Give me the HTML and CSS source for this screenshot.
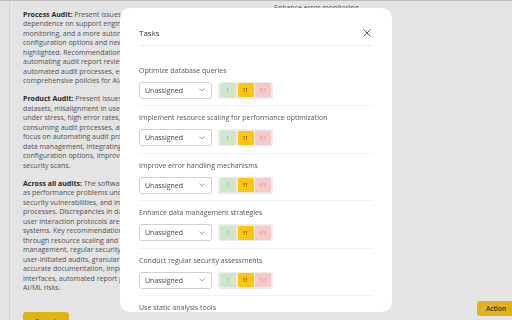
FILE: index.html
```html
<!DOCTYPE html>
<html lang="en">
<head>
<meta charset="utf-8">
<title>Audit report</title>
<link rel="stylesheet" href="styles.css">
</head>
<body>
<div class="page">
  <div class="layout">
    <aside class="report">
      <p><b>Process Audit:</b> Present issues include heavy<br>dependence on support engineers, limited<br>monitoring, and a more automated workflow,<br>configuration options and new features are<br>highlighted. Recommendations include<br>automating audit report reviews, adopting<br>automated audit processes, enforcing<br>comprehensive policies for AI/ML usage.</p>
      <p><b>Product Audit:</b> Present issues include large<br>datasets, misalignment in user expectations,<br>under stress, high error rates, and time-<br>consuming audit processes, alongside a<br>focus on automating audit processes, better<br>data management, integrating richer<br>configuration options, improving regular<br>security scans.</p>
      <p><b>Across all audits:</b> The software faces issues such<br>as performance problems under heavy load,<br>security vulnerabilities, and inconsistent audit<br>processes. Discrepancies in data handling and<br>user interaction protocols are seen across<br>systems. Key recommendations include scaling<br>through resource scaling and improved data<br>management, regular security assessments,<br>user-initiated audits, granular controls,<br>accurate documentation, improved user<br>interfaces, automated report generation and<br>AI/ML risks.</p>
      <button class="export" type="button">Export</button>
    </aside>
    <main class="board">
      <div class="ghost-task">Enhance error monitoring</div>
    </main>
  </div>
  <button class="action" type="button">Action</button>
</div>

<div class="overlay"></div>

<div class="modal" role="dialog" aria-label="Tasks">
  <div class="modal-head">
    <h2 class="modal-title">Tasks</h2>
    <svg class="close" width="8" height="8" viewBox="0 0 8 8"><path d="M0.5 0.5 L7.5 7.5 M7.5 0.5 L0.5 7.5" stroke="#555" stroke-width="1" fill="none"/></svg>
  </div>
  <div class="modal-body">
    <div class="task-row">
      <div class="task-label">Optimize database queries</div>
      <div class="task-controls">
        <div class="select"><span>Unassigned</span><svg width="6" height="4" viewBox="0 0 6 4"><path d="M0.5 0.5 L3 3 L5.5 0.5" stroke="#8a8a8a" stroke-width="0.8" fill="none"/></svg></div>
        <div class="priority"><span class="p low">!</span><span class="p mid">!!</span><span class="p high">!!!</span></div>
      </div>
    </div>
    <div class="task-row">
      <div class="task-label">Implement resource scaling for performance optimization</div>
      <div class="task-controls">
        <div class="select"><span>Unassigned</span><svg width="6" height="4" viewBox="0 0 6 4"><path d="M0.5 0.5 L3 3 L5.5 0.5" stroke="#8a8a8a" stroke-width="0.8" fill="none"/></svg></div>
        <div class="priority"><span class="p low">!</span><span class="p mid">!!</span><span class="p high">!!!</span></div>
      </div>
    </div>
    <div class="task-row">
      <div class="task-label">Improve error handling mechanisms</div>
      <div class="task-controls">
        <div class="select"><span>Unassigned</span><svg width="6" height="4" viewBox="0 0 6 4"><path d="M0.5 0.5 L3 3 L5.5 0.5" stroke="#8a8a8a" stroke-width="0.8" fill="none"/></svg></div>
        <div class="priority"><span class="p low">!</span><span class="p mid">!!</span><span class="p high">!!!</span></div>
      </div>
    </div>
    <div class="task-row">
      <div class="task-label">Enhance data management strategies</div>
      <div class="task-controls">
        <div class="select"><span>Unassigned</span><svg width="6" height="4" viewBox="0 0 6 4"><path d="M0.5 0.5 L3 3 L5.5 0.5" stroke="#8a8a8a" stroke-width="0.8" fill="none"/></svg></div>
        <div class="priority"><span class="p low">!</span><span class="p mid">!!</span><span class="p high">!!!</span></div>
      </div>
    </div>
    <div class="task-row">
      <div class="task-label">Conduct regular security assessments</div>
      <div class="task-controls">
        <div class="select"><span>Unassigned</span><svg width="6" height="4" viewBox="0 0 6 4"><path d="M0.5 0.5 L3 3 L5.5 0.5" stroke="#8a8a8a" stroke-width="0.8" fill="none"/></svg></div>
        <div class="priority"><span class="p low">!</span><span class="p mid">!!</span><span class="p high">!!!</span></div>
      </div>
    </div>
    <div class="task-row">
      <div class="task-label">Use static analysis tools</div>
      <div class="task-controls">
        <div class="select"><span>Unassigned</span><svg width="6" height="4" viewBox="0 0 6 4"><path d="M0.5 0.5 L3 3 L5.5 0.5" stroke="#8a8a8a" stroke-width="0.8" fill="none"/></svg></div>
        <div class="priority"><span class="p low">!</span><span class="p mid">!!</span><span class="p high">!!!</span></div>
      </div>
    </div>
  </div>
</div>
</body>
</html>
```

FILE: styles.css
```css
* { box-sizing: border-box; }
html, body { margin: 0; height: 100%; }
body {
  font-family: "Open Sans", "DejaVu Sans", sans-serif;
  background: #fff;
  color: #555;
  overflow: hidden;
}
.page {
  height: 320px;
  border-top: 1px solid #d4d4d4;
}
.layout {
  display: flex;
  height: 100%;
}
.report {
  margin-left: 9px;
  border-left: 1px solid #eeeeee;
  padding: 8.5px 0 0 13px;
  width: 200px;
  flex: none;
  font-size: 7px;
  line-height: 9.5px;
  color: #5c5c5c;
  white-space: nowrap;
}
.report p { margin: 0 0 8.5px; }
.report b { color: #2e2e2e; font-weight: 700; }
.export {
  display: block;
  margin-top: 19.5px;
  width: 46px;
  height: 18px;
  border: none;
  border-radius: 3px;
  background: #fbc91a;
  font-family: inherit;
  font-size: 7px;
  color: #333;
  padding: 0;
}
.board {
  flex: 1;
  padding: 2px 0 0 65px;
  font-size: 7px;
  line-height: 9px;
  color: #666;
}
.action {
  position: fixed;
  right: -4px;
  bottom: 4px;
  width: 39px;
  height: 15px;
  border: none;
  border-radius: 3px;
  background: #fbc91a;
  font-family: inherit;
  font-size: 6.5px;
  font-weight: 600;
  color: #333;
  text-align: left;
  padding: 0 0 0 9px;
}
.overlay {
  position: fixed;
  inset: 0;
  background: rgba(0, 0, 0, 0.105);
}
.modal {
  position: fixed;
  left: 120px;
  top: 8px;
  width: 272px;
  height: 304px;
  background: #fff;
  border-radius: 10px;
  overflow: hidden;
  padding: 0 19px;
}
.modal-head {
  display: flex;
  align-items: center;
  justify-content: space-between;
  padding: 19px 2px 6px 0;
  border-bottom: 1px solid #f7eed8;
}
.modal-title {
  margin: 0;
  font-size: 8px;
  line-height: 12px;
  font-weight: 400;
  color: #333;
}
.close { display: block; }
.modal-body { padding-top: 12.5px; }
.task-row {
  padding: 7px 0 6.5px;
  border-bottom: 1px solid #f3f3f3;
}
.task-label {
  font-size: 7px;
  line-height: 9px;
  color: #555;
}
.task-controls {
  margin-top: 7px;
  display: flex;
  align-items: center;
  gap: 6px;
}
.select {
  width: 73px;
  height: 17px;
  border: 1px solid #cfcfcf;
  border-radius: 3px;
  display: flex;
  align-items: center;
  justify-content: space-between;
  padding: 0 6px 0 5px;
  font-size: 7px;
  color: #444;
}
.select svg { display: block; }
.priority {
  height: 17px;
  display: flex;
  align-items: center;
  gap: 1.5px;
  padding: 0 2px;
  background: #ececec;
  border-radius: 2px;
}
.p {
  width: 16px;
  height: 14px;
  border-radius: 1.5px;
  display: flex;
  align-items: center;
  justify-content: center;
  font-size: 6px;
  font-weight: 700;
  letter-spacing: 0.6px;
}
.low { background: #cbe8cc; color: #98bc99; }
.mid { background: #ffc507; color: #6e5300; }
.high { background: #f4caca; color: #d89f9f; }
```
